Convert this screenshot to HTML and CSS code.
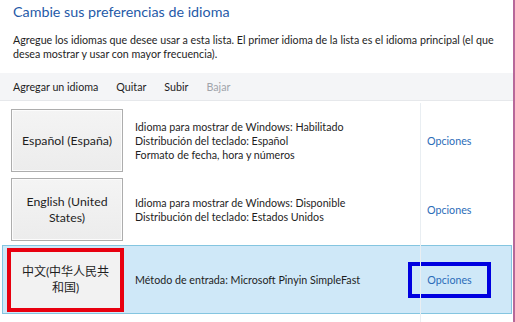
FILE: index.html
```html
<!DOCTYPE html>
<html lang="es">
<head>
<meta charset="utf-8">
<link rel="stylesheet" href="styles.css">
</head>
<body>
<div class="window">
  <h1 class="title">Cambie sus preferencias de idioma</h1>
  <p class="desc">Agregue los idiomas que desee usar a esta lista. El primer idioma de la lista es el idioma principal (el que desea mostrar y usar con mayor frecuencia).</p>
  <div class="toolbar">
    <span class="tool">Agregar un idioma</span>
    <span class="tool">Quitar</span>
    <span class="tool">Subir</span>
    <span class="tool disabled">Bajar</span>
  </div>
  <div class="list">
    <div class="row">
      <div class="cell-lang"><div class="langbtn">Español (España)</div></div>
      <div class="cell-info">
        <div>Idioma para mostrar de Windows: Habilitado</div>
        <div>Distribución del teclado: Español</div>
        <div>Formato de fecha, hora y números</div>
      </div>
      <div class="cell-opt"><span class="link">Opciones</span></div>
    </div>
    <div class="row">
      <div class="cell-lang"><div class="langbtn">English (United States)</div></div>
      <div class="cell-info">
        <div>Idioma para mostrar de Windows: Disponible</div>
        <div>Distribución del teclado: Estados Unidos</div>
      </div>
      <div class="cell-opt"><span class="link">Opciones</span></div>
    </div>
    <div class="row selected">
      <div class="cell-lang"><div class="langbtn marked">中文(中华人民共和国)</div></div>
      <div class="cell-info">
        <div>Método de entrada: Microsoft Pinyin SimpleFast</div>
      </div>
      <div class="cell-opt"><span class="link boxed">Opciones</span></div>
    </div>
  </div>
</div>
</body>
</html>
```
FILE: styles.css
```css
* { box-sizing: border-box; }
html, body { margin: 0; padding: 0; background: #fff; }
body {
  font-family: "Lato", "Noto Sans CJK SC", sans-serif;
  font-size: 10.7px;
  color: #1e1e1e;
}
.window {
  width: 515px;
  height: 322px;
  border-right: 2px solid #b8689a;
  overflow: hidden;
  display: flex;
  flex-direction: column;
}
.title {
  margin: 2px 0 0 13px;
  font-size: 14.3px;
  font-weight: normal;
  color: #1f5aa8;
  line-height: 20px;
}
.desc {
  margin: 11px 0 0 13px;
  width: 495px;
  line-height: 14px;
}
.toolbar {
  margin-top: 12px;
  height: 28px;
  background: #f4f5f7;
  border-bottom: 1px solid #e6e8eb;
  display: flex;
  align-items: center;
  padding-left: 13px;
  gap: 18px;
}
.tool.disabled { color: #a0a4aa; }
.list {
  position: relative;
  flex: 1;
  padding-top: 5px;
  display: flex;
  flex-direction: column;
}
.list::after {
  content: "";
  position: absolute;
  left: 420px;
  top: 2px;
  bottom: 0;
  width: 1px;
  background: #e9eef2;
}
.row {
  display: flex;
  height: 69px;
  align-items: center;
  margin-right: 1px;
  border: 1px solid transparent;
  margin-left: 2px;
}
.cell-lang {
  width: 128px;
  padding-left: 8px;
}
.langbtn {
  width: 112px;
  height: 63px;
  background: linear-gradient(#f4f4f4, #ececec);
  border: 1px solid #adadad;
  box-shadow: inset 0 0 0 1px #fcfcfc;
  display: flex;
  align-items: center;
  justify-content: center;
  text-align: center;
  font-size: 12.3px;
  line-height: 16px;
  padding: 0 6px;
}
.cell-info {
  width: 289px;
  padding-left: 4px;
  line-height: 14px;
}
.cell-opt {
  flex: 1;
  padding-left: 7px;
}
.link { color: #2b6cb8; }
.selected {
  background: #cfe8f8;
  border-color: #84c5e0;
  height: 69px;
  margin-top: 1px;
}
.selected .cell-lang { padding-left: 4px; }
.langbtn.marked {
  width: 117px;
  height: 64px;
  border: 4px solid #e8000f;
  box-shadow: none;
  background: #f2f2f2;
  padding: 0 9px;
  font-size: 12px;
}
.link.boxed {
  display: inline-flex;
  align-items: center;
  justify-content: center;
  width: 83px;
  height: 36px;
  margin-left: -19px;
  border: 4px solid #0000e0;
}
```
